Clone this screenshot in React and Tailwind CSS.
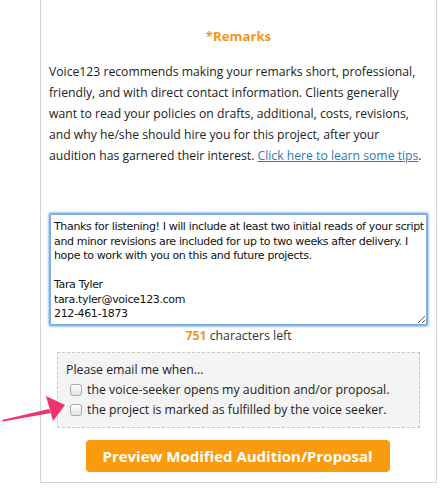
import React from 'react';

const remarks = `Thanks for listening! I will include at least two initial reads of your script and minor revisions are included for up to two weeks after delivery. I hope to work with you on this and future projects.

Tara Tyler
tara.tyler@voice123.com
212-461-1873`;

const Check = ({ label }) => (
  <label className="flex items-center h-[20px] pl-[4px]">
    <span className="w-[12px] h-[12px] rounded-[3px] border border-[#a9a9a9] bg-gradient-to-b from-[#fdfdfd] to-[#e4e4e4] shrink-0 mr-[5px]" />
    <span>{label}</span>
  </label>
);

const App = () => {
  return (
    <div className="relative w-[445px] h-[500px] bg-white font-['Open_Sans',sans-serif] text-[#333]">
      <div className="ml-[40px] w-[397px] border-l border-r border-b border-[#d4d4d4] px-[8px] pt-[26px] pb-[10px]">
        {/* Title */}
        <h2 className="text-center text-[13.2px] leading-[20px] font-bold text-[#f7941d]">*Remarks</h2>

        {/* Intro */}
        <p className="mt-[15px] text-[12.2px] leading-[21px] text-[#222]">
          Voice123 recommends making your remarks short, professional, friendly, and with direct contact information. Clients generally want to read your policies on drafts, additional, costs, revisions, and why he/she should hire you for this project, after your audition has garnered their interest.{' '}
          <a href="#" className="text-[#2a7bb8] underline">Click here to learn some tips</a>.
        </p>

        {/* Remarks field */}
        <textarea
          defaultValue={remarks}
          className="mt-[47px] block w-[379px] h-[113px] rounded-[2px] border-2 border-[#80aee6] shadow-[0_0_2px_1px_#a9c8ef] pl-[3px] pr-0 pt-[5px] font-['DejaVu_Sans',sans-serif] text-[11px] tracking-[-0.35px] leading-[14.5px] text-[#111] outline-none resize"
        />
        <div className="text-center text-[12.3px] leading-[18px] mt-[1px]">
          <span className="font-bold text-[#f7941d]">751</span> characters left
        </div>

        {/* Email options */}
        <div className="mx-[8px] mt-[7px] bg-[#f4f4f4] border border-dashed border-[#c9c9c9] px-[8px] pt-[7px] pb-[7px] text-[12.3px] leading-[20px] text-[#222]">
          <div>Please email me when...</div>
          <Check label="the voice-seeker opens my audition and/or proposal." />
          <Check label="the project is marked as fulfilled by the voice seeker." />
        </div>

        {/* Submit */}
        <div className="flex justify-center mt-[12px]">
          <button className="w-[304px] h-[32px] rounded-[4px] bg-[#f99b0c] text-white font-bold text-[15px] -translate-x-[1px]">
            Preview Modified Audition/Proposal
          </button>
        </div>
      </div>

      {/* Annotation arrow */}
      <svg className="absolute left-0 top-[394px]" width="70" height="30" viewBox="0 394 70 30">
        <path d="M2 420 L49 409 L51 413 L3 421.5 Z" fill="#f1346d" />
        <path d="M65 405 L46 396 L53 421 Z" fill="#f1346d" />
      </svg>
    </div>
  );
};

export default App;
